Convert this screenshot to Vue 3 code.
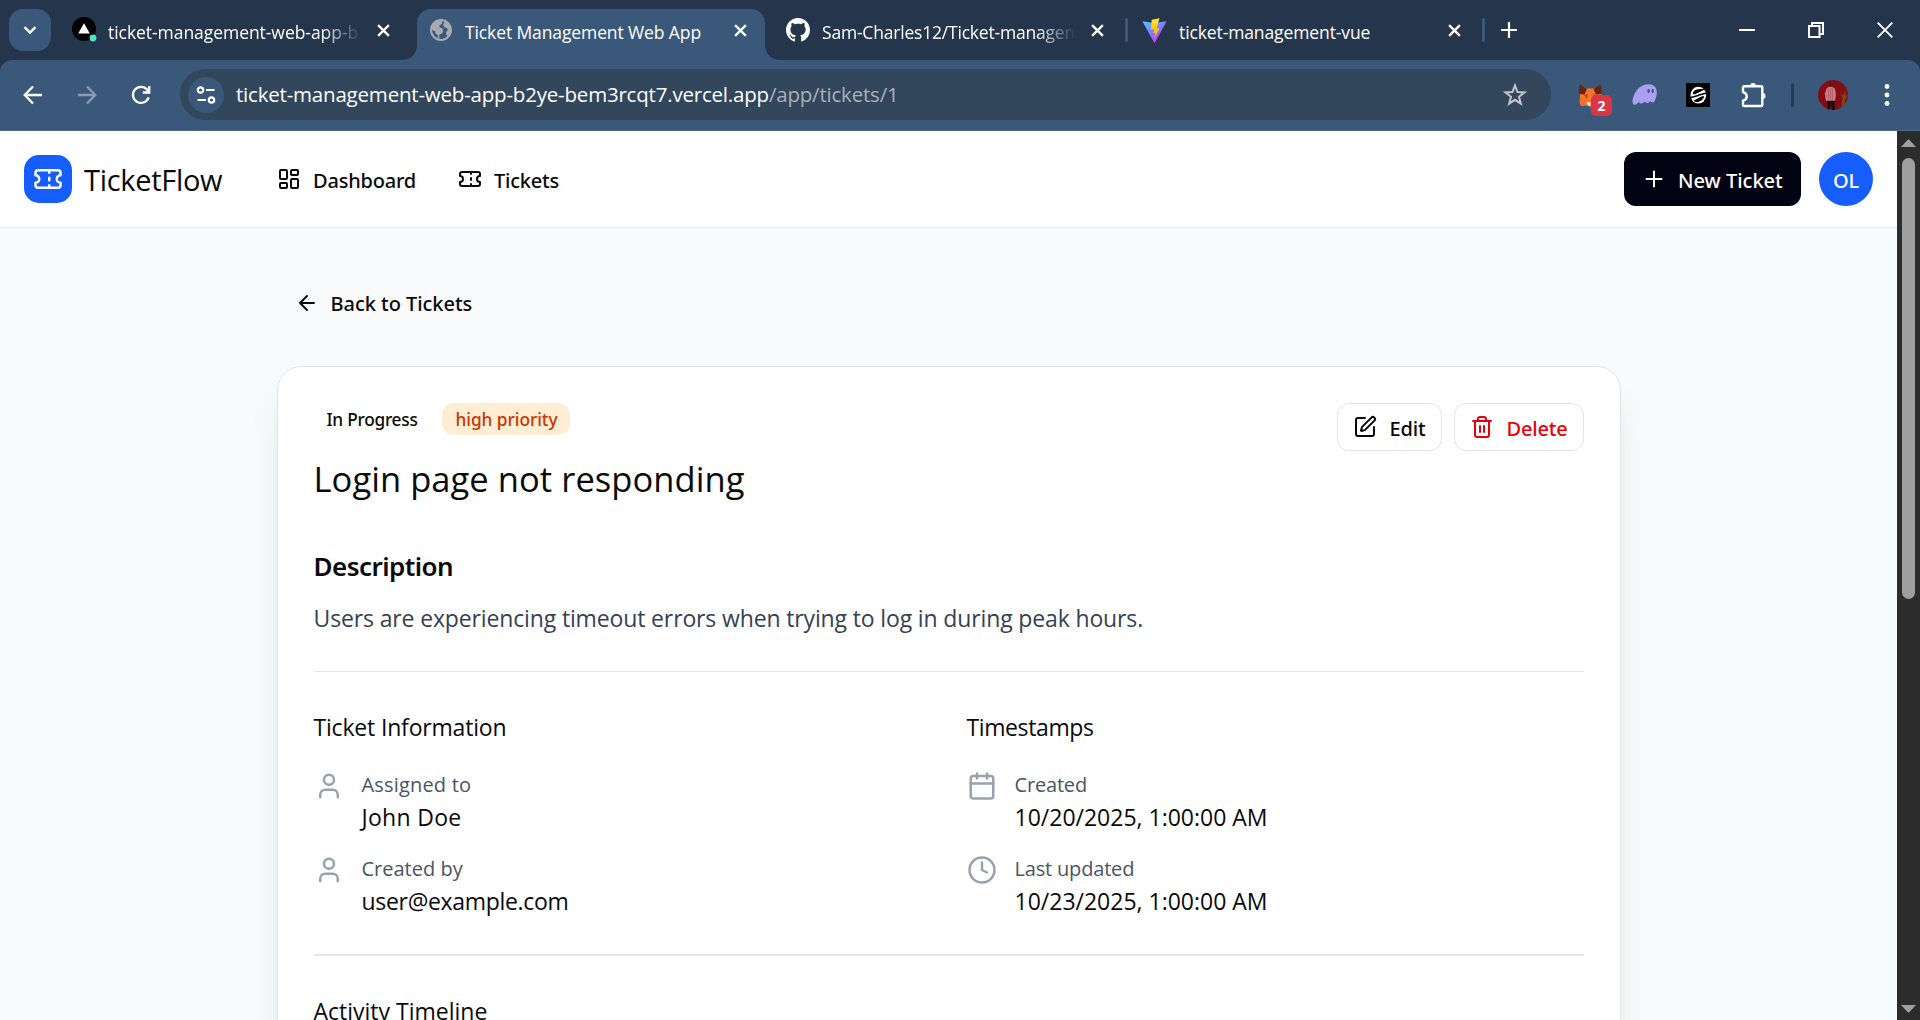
<script setup>
const people = [
  { label: 'Assigned to', value: 'John Doe', a: 'ls-p18', b: 'ls-p30' },
  { label: 'Created by', value: 'user@example.com', a: 'ls-0', b: 'ls-m31' },
]
const times = [
  { icon: 'calendar', label: 'Created', value: '10/20/2025, 1:00:00 AM' },
  { icon: 'clock', label: 'Last updated', value: '10/23/2025, 1:00:00 AM' },
]
</script>

<template>
  <div class="window">
    <div class="tabstrip">
      <button class="tab-search">
        <svg width="16" height="16" viewBox="0 0 16 16" fill="none" stroke="#fff" stroke-width="2.4"><path d="M2.6 5.2 8 10.6l5.4-5.4" /></svg>
      </button>

      <div class="tab tab-one">
        <svg class="fav" width="26" height="26" viewBox="0 0 26 26">
          <circle cx="12" cy="12" r="12" fill="#000" />
          <path d="M12 6.2 17.8 16.6H6.2z" fill="#fff" />
          <circle cx="21" cy="21" r="3.4" fill="#50e3c2" />
        </svg>
        <span class="tab-title fade">ticket-management-web-app-b2ye</span>
        <svg class="x" viewBox="0 0 12 12"><path d="M1 1l10 10M11 1 1 11" /></svg>
      </div>

      <div class="tab tab-active">
        <svg class="fav" width="22" height="22" viewBox="0 0 22 22">
          <circle cx="11" cy="11" r="10" fill="#3b597b" stroke="#a5abb1" stroke-width="2" />
          <path d="M1.5 11c0-5.500 4-9.500 9.500-9.700l1.300.5-.3 3.200-2.600 1.300.2 2.200 2.500.6 1.300 2.600-1.500 3-2.400.6-.3 4-1.700.8L8 16.500l-2.800-2.400.3-1.900z" fill="#a5abb1" />
          <path d="M14.500 2.200c4 1.500 6 5 6 8.800 0 2.500-1 5-2.500 6.800l-1.800-2-.2-2.800 1.900-1.800-.9-2.300-2.600-.6-1.200-2.100z" fill="#a5abb1" />
        </svg>
        <span class="tab-title">Ticket Management Web App</span>
        <svg class="x" viewBox="0 0 12 12"><path d="M1 1l10 10M11 1 1 11" /></svg>
      </div>

      <div class="tab tab-three">
        <svg class="fav" width="24" height="24" viewBox="0 0 16 16" fill="#fff"><path d="M8 0C3.580 0 0 3.580 0 8c0 3.540 2.290 6.530 5.470 7.590.4.070.55-.17.55-.38 0-.19-.01-.82-.01-1.490-2.010.37-2.530-.49-2.690-.94-.09-.23-.48-.94-.82-1.130-.28-.15-.68-.52-.01-.53.63-.01 1.080.58 1.230.82.72 1.210 1.870.87 2.330.66.070-.52.28-.87.51-1.070-1.780-.2-3.640-.89-3.640-3.950 0-.87.31-1.590.82-2.150-.08-.2-.36-1.020.08-2.120 0 0 .67-.21 2.200.82.64-.18 1.320-.27 2-.27s1.360.09 2 .27c1.530-1.040 2.200-.82 2.200-.82.44 1.100.16 1.920.08 2.120.51.56.82 1.270.82 2.150 0 3.070-1.870 3.750-3.650 3.950.29.25.54.73.54 1.480 0 1.070-.01 1.930-.01 2.200 0 .21.15.46.55.38A8.010 8.010 0 0 0 16 8c0-4.420-3.580-8-8-8z" /></svg>
        <span class="tab-title fade">Sam-Charles12/Ticket-management</span>
        <svg class="x" viewBox="0 0 12 12"><path d="M1 1l10 10M11 1 1 11" /></svg>
      </div>
      <i class="tab-sep"></i>
      <div class="tab tab-four">
        <svg class="fav" width="25" height="25" viewBox="0 0 25 25">
          <defs>
            <linearGradient id="vg" x1="0" y1="0" x2=".6" y2="1"><stop offset="0" stop-color="#41d1ff" /><stop offset="1" stop-color="#bd34fe" /></linearGradient>
            <linearGradient id="vb" x1="0" y1="0" x2="0" y2="1"><stop offset="0" stop-color="#ffea2e" /><stop offset="1" stop-color="#ffa800" /></linearGradient>
          </defs>
          <path d="M.4 3.200 12 5l12.600-1.800L13 24.600q-.5.700-1 0z" fill="url(#vg)" />
          <path d="M17.500.2 9.700 1.700 9 11.700l3.200-.6-.9 4.200 2-.6-1.300 6.500 5.500-11-3 .5z" fill="url(#vb)" />
        </svg>
        <span class="tab-title">ticket-management-vue</span>
        <svg class="x" viewBox="0 0 12 12"><path d="M1 1l10 10M11 1 1 11" /></svg>
      </div>
      <i class="tab-sep"></i>
      <svg class="plus-tab" width="16" height="16" viewBox="0 0 16 16" stroke="#fff" stroke-width="2.200"><path d="M8 0v16M0 8h16" /></svg>
      <div class="controls">
        <svg width="16" height="16" viewBox="0 0 16 16" stroke="#fff" stroke-width="2" fill="none"><path d="M0 8h16" /></svg>
        <svg width="16" height="16" viewBox="0 0 16 16" stroke="#fff" stroke-width="2" fill="none"><path d="M1 4h10.500v11H1zM4 4V1h11v11h-3.500" /></svg>
        <svg width="16" height="16" viewBox="0 0 16 16" stroke="#fff" stroke-width="1.900" fill="none"><path d="M.7.7l14.600 14.600M15.300.7.7 15.300" /></svg>
      </div>
    </div>

    <div class="toolbar">
      <svg class="nav" viewBox="0 0 20 20"><path d="M19 10H2M10 1.500 1.700 10l8.300 8.500" /></svg>
      <svg class="nav dim" viewBox="0 0 20 20"><path d="M1 10h17M10 1.500l8.300 8.500-8.300 8.500" /></svg>
      <svg class="nav" viewBox="0 0 20 20"><path d="M17.600 12.300A8 8 0 1 1 16 4.600L18 7M18.200 1v6.500h-6.400" /></svg>
      <div class="omnibox">
        <span class="site">
          <svg width="20" height="20" viewBox="0 0 20 20" fill="none" stroke="#fff" stroke-width="2.200"><circle cx="4.500" cy="5" r="2.700" /><path d="M10 5h8.500M1.500 15H10" /><circle cx="15.500" cy="15" r="2.700" /></svg>
        </span>
        <span class="url">ticket-management-web-app-b2ye-bem3rcqt7.vercel.app<span class="path">/app/tickets/1</span></span>
        <svg class="star" width="24" height="24" viewBox="0 0 24 24" fill="none" stroke="#c4c6c8" stroke-width="2"><path d="M12 2.500l2.500 6.600 7 .3-5.500 4.400 1.900 6.900-5.900-3.900-5.900 3.900L8 13.800 2.500 9.400l7-.3z" /></svg>
      </div>
      <div class="ext">
        <div class="fox">
          <svg width="26" height="26" viewBox="0 0 26 26">
            <path d="M2 4l7 2.500h6L22.500 4l1 8-1.500 10-5 1-4 2.500-4-2-6 .5-1-8z" fill="#f6752b" />
            <path d="M2 2.500 9 7l-2.500 5.500L1 12 .8 7zM22.500 2.500 15.500 7l2.500 5.500 5.500-.5.200-5z" fill="#6b2412" />
            <path d="M6 13l4-1-1 5zM19 13l-4-1 1 5z" fill="#c8410f" />
            <path d="M1.500 17.500 8 17l2 5-8 .7z" fill="#ff6a2b" />
            <path d="M8.500 20h4v4l-3-1z" fill="#e9e2dd" />
          </svg>
          <b class="badge">2</b>
        </div>
        <svg class="ghost" width="25" height="21" viewBox="0 0 25 21">
          <path d="M.5 16.500C1.500 9.500 7 .5 16 .3c5.500-.2 9 3 8.800 8.200-.2 4.500-2 9.700-4 10-1.500.2-2-1-2.500-1.500-1 1.500-2.200 2.200-3.500 2-1-.2-1.300-1-1.600-1.500C11 19.300 8.700 20 7.800 19.200c-.6-.5-.5-1.100-.4-1.600C5.500 19.800 3.900 20.900 2.300 20.700.9 20.500.2 18.500.5 16.500z" fill="#ab9ff2" />
          <ellipse cx="16.500" cy="7" rx="1.200" ry="2" fill="#3b4e77" /><ellipse cx="20.700" cy="7" rx="1.200" ry="2" fill="#3b4e77" />
        </svg>
        <svg class="sbox" width="24" height="24" viewBox="0 0 24 24">
          <path d="M0 0h24v24H0z" fill="#000" />
          <ellipse cx="12.300" cy="12.200" rx="7.800" ry="8.400" fill="#fff" />
          <path d="M18.800 6.500 9.500 11c-2 1-3.300-.3-2.300-2C8.500 7 13 5.300 18.800 6.500zM17.800 13c.8 2-2 5.300-6 6-1.800.2-3.300-.3-4.300-1.200l6-3.300c1.500-.8 2.700-1.200 4.300-1.500z" fill="#000" />
          <path d="M3.500 15 13 12.200M12 12.300l8.800-2.200" stroke="#000" stroke-width="1.500" />
        </svg>
        <svg class="puzzle" width="26" height="26" viewBox="0 0 26 26" fill="none" stroke="#fff" stroke-width="2.400" stroke-linejoin="round"><path d="M3 4.300h17.300a1 1 0 0 1 1 1V23a1 1 0 0 1-1 1H3a1 1 0 0 1-1-1v-4.300c5-1.500 5-7 0-8.700V5.300a1 1 0 0 1 1-1z" /><path d="M9 4a3 3 0 0 1 6 0zM21.500 11a3 3 0 0 1 0 6z" fill="#fff" stroke="none" /></svg>
        <i class="ext-sep"></i>
        <svg class="me" width="30" height="30" viewBox="0 0 30 30">
          <defs><clipPath id="pc"><circle cx="15" cy="15" r="15" /></clipPath></defs>
          <g clip-path="url(#pc)">
            <path d="M0 0h30v30H0z" fill="#860c14" />
            <path d="M23 28l1.500-10L22 12l3 3.500L27.500 10v6l2.500-2-2.500 6-2.500 8z" fill="#7d431d" />
            <path d="M9 19.500h7.500L17 30h-3.200L12.800 22l-.8 8H9z" fill="#1a0b0d" />
            <path d="M8.500 8.500l2.500-1.700h3l2.800 1.700 1.200 6-1 6.300H8L6.800 14z" fill="#c57c82" />
            <path d="M10.500 8.500v11M12.500 8v11.500M14.500 8.500v11" stroke="#a94e58" stroke-width=".6" />
            <ellipse cx="12.500" cy="4.300" rx="1.700" ry="2.300" fill="#4a1c17" />
          </g>
        </svg>
        <svg class="dots" width="6" height="22" viewBox="0 0 6 22" fill="#fff"><circle cx="3" cy="2.500" r="2.400" /><circle cx="3" cy="11" r="2.400" /><circle cx="3" cy="19.500" r="2.400" /></svg>
      </div>
    </div>

    <div class="viewport">
      <div class="page">
        <header>
          <div class="logo">
            <svg class="ic" width="30" height="30" viewBox="0 0 24 24"><path d="M2 9a3 3 0 0 1 0 6v2a2 2 0 0 0 2 2h16a2 2 0 0 0 2-2v-2a3 3 0 0 1 0-6V7a2 2 0 0 0-2-2H4a2 2 0 0 0-2 2Z" /><path d="M13 5v2M13 17v2M13 11v2" /></svg>
          </div>
          <span class="brand">TicketFlow</span>
          <nav>
            <a><svg class="ic" width="24" height="24" viewBox="0 0 24 24"><rect width="7" height="9" x="3" y="3" rx="1" /><rect width="7" height="5" x="14" y="3" rx="1" /><rect width="7" height="9" x="14" y="12" rx="1" /><rect width="7" height="5" x="3" y="16" rx="1" /></svg><span>Dashboard</span></a>
            <a><svg class="ic" width="24" height="24" viewBox="0 0 24 24"><path d="M2 9a3 3 0 0 1 0 6v2a2 2 0 0 0 2 2h16a2 2 0 0 0 2-2v-2a3 3 0 0 1 0-6V7a2 2 0 0 0-2-2H4a2 2 0 0 0-2 2Z" /><path d="M13 5v2M13 17v2M13 11v2" /></svg><span>Tickets</span></a>
          </nav>
          <button class="new"><svg class="ic" width="24" height="24" viewBox="0 0 24 24"><path d="M4.500 12h15M12 4.500v15" /></svg><span>New Ticket</span></button>
          <div class="avatar"><span>OL</span></div>
        </header>

        <main>
          <a class="back"><svg class="ic" width="24" height="24" viewBox="0 0 24 24"><path d="m12 19-7-7 7-7M19 12H5" /></svg><span>Back to Tickets</span></a>

          <section class="card">
            <div class="top">
              <div>
                <div class="badges"><span class="status">In Progress</span><span class="priority">high priority</span></div>
                <h1>Login page not responding</h1>
              </div>
              <div class="actions">
                <button class="edit"><svg class="ic" width="24" height="24" viewBox="0 0 24 24"><path d="M12 3H5a2 2 0 0 0-2 2v14a2 2 0 0 0 2 2h14a2 2 0 0 0 2-2v-7" /><path d="M18.375 2.625a1 1 0 0 1 3 3l-9.013 9.014a2 2 0 0 1-.853.505l-2.873.84a.5.5 0 0 1-.62-.62l.84-2.873a2 2 0 0 1 .506-.852z" /></svg><span>Edit</span></button>
                <button class="delete"><svg class="ic" width="24" height="24" viewBox="0 0 24 24"><path d="M3 6h18M19 6v14c0 1-1 2-2 2H7c-1 0-2-1-2-2V6M8 6V4c0-1 1-2 2-2h4c1 0 2 1 2 2v2M10 11v6M14 11v6" /></svg><span>Delete</span></button>
              </div>
            </div>
            <h2>Description</h2>
            <p class="desc">Users are experiencing timeout errors when trying to log in during peak hours.</p>
            <hr>
            <div class="cols">
              <div>
                <h3 class="ls-m18">Ticket Information</h3>
                <div v-for="p in people" :key="p.label" class="item">
                  <svg class="ic" width="30" height="30" viewBox="0 0 24 24"><path d="M19 21v-2a4 4 0 0 0-4-4H9a4 4 0 0 0-4 4v2" /><circle cx="12" cy="7" r="4" /></svg>
                  <div><p class="label" :class="p.a">{{ p.label }}</p><p class="value" :class="p.b">{{ p.value }}</p></div>
                </div>
              </div>
              <div>
                <h3 class="ls-m39">Timestamps</h3>
                <div v-for="t in times" :key="t.label" class="item">
                  <svg class="ic" width="30" height="30" viewBox="0 0 24 24">
                    <template v-if="t.icon === 'calendar'"><path d="M8 2v4M16 2v4M3 10h18" /><rect width="18" height="18" x="3" y="4" rx="2" /></template>
                    <template v-else><circle cx="12" cy="12" r="10" /><path d="M12 6v6l4 2" /></template>
                  </svg>
                  <div><p class="label ls-m18">{{ t.label }}</p><p class="value">{{ t.value }}</p></div>
                </div>
              </div>
            </div>
            <hr class="thick">
            <h3 class="activity">Activity Timeline</h3>
          </section>
        </main>
      </div>
      <div class="scroll">
        <svg width="15" height="8" viewBox="0 0 15 8" fill="#9f9f9f"><path d="M7.500 0 15 8H0z" /></svg>
        <div class="track"><div class="thumb"></div></div>
        <svg width="15" height="8" viewBox="0 0 15 8" fill="#9f9f9f"><path d="M7.500 8 15 0H0z" /></svg>
      </div>
    </div>
  </div>
</template>

<style>
body { margin: 0; overflow: hidden; }
</style>

<style scoped>
* { box-sizing: border-box; }
.window { width: 1920px; height: 1020px; overflow: hidden; display: flex; flex-direction: column; background: #25364c; font-family: "Open Sans", "Noto Sans", sans-serif; color: #0a0a0a; }
svg { display: block; flex: none; }
button { border: 0; padding: 0; font-family: inherit; color: inherit; }
h1, h2, h3, p { margin: 0; font-weight: 400; white-space: nowrap; }
.ic { fill: none; stroke: currentColor; stroke-width: 2; stroke-linecap: round; stroke-linejoin: round; }

/* tab strip */
.tabstrip { height: 60px; flex: none; display: flex; align-items: center; padding-left: 9px; color: #fff; }
.tab-search { width: 42px; height: 42px; border-radius: 14px; background: #3a587a; display: grid; place-items: center; }
.tab { display: flex; align-items: center; }
.tab .fav { overflow: visible; }
.tab-title { flex: 1; min-width: 0; overflow: hidden; white-space: nowrap; font-size: 17.500px; line-height: 24px; padding-top: 3px; letter-spacing: -.11px; }
.fade { -webkit-mask-image: linear-gradient(90deg, #000 calc(100% - 40px), transparent); mask-image: linear-gradient(90deg, #000 calc(100% - 40px), transparent); }
.x { width: 13px; height: 13px; fill: none; stroke: #fff; stroke-width: 2.100; }
.tab-one { margin-left: 21px; width: 318px; }
.tab-one .tab-title { margin: 0 16px 0 10px; letter-spacing: -.05px; }
.tab-active { position: relative; margin-left: 27px; width: 348px; height: 51px; align-self: flex-end; background: #3a587a; border-radius: 14px 14px 0 0; padding: 0 18px 9px 13px; }
.tab-active .tab-title { margin-left: 13px; }
.tab-active::before, .tab-active::after { content: ""; position: absolute; bottom: 0; width: 14px; height: 14px; }
.tab-active::before { left: -14px; background: radial-gradient(circle at 0 0, transparent 13.500px, #3a587a 14px); }
.tab-active::after { right: -14px; background: radial-gradient(circle at 100% 0, transparent 13.500px, #3a587a 14px); }
.tab-three { margin-left: 21px; width: 318px; }
.tab-three .tab-title { margin: 0 16px 0 12px; letter-spacing: -.2px; }
.tab-sep { width: 3px; height: 24px; border-radius: 2px; background: #3a587a; flex: none; margin-left: 21px; }
.tab-four { margin-left: 14px; width: 319px; }
.tab-four .tab-title { margin-left: 12px; }
.plus-tab { margin-left: 16px; }
.controls { margin-left: auto; display: flex; gap: 53px; padding: 0 27px 1px 0; }

/* toolbar */
.toolbar { height: 71px; flex: none; display: flex; align-items: center; background: #3a587a; border-radius: 12px 12px 0 0; padding: 0 0 2px 23px; box-shadow: inset 0 -1px #4d6787; }
.nav { width: 20px; height: 20px; fill: none; stroke: #fff; stroke-width: 2.300; margin-right: 34px; }
.nav.dim { stroke: #8a9bb0; }
.nav:nth-child(3) { margin-right: 29px; }
.omnibox { width: 1371px; height: 51px; border-radius: 26px; background: #32465c; display: flex; align-items: center; padding: 0 24px 0 8px; }
.site { width: 36px; height: 36px; border-radius: 50%; background: #3a587a; display: grid; place-items: center; }
.url { flex: 1; margin-left: 12px; font-size: 20.500px; color: #fff; letter-spacing: -.2px; line-height: 30px; padding-bottom: 1px; white-space: nowrap; }
.path { color: #a9b1bb; letter-spacing: -.2px; }
.ext { display: flex; align-items: center; }
.fox { position: relative; margin-left: 27px; }
.badge { position: absolute; left: 13px; top: 13px; width: 21px; height: 21px; border-radius: 5px; background: #db3445; color: #fff; font-size: 14px; line-height: 21px; text-align: center; }
.ghost { margin-left: 28px; }
.sbox { margin-left: 29px; }
.puzzle { margin-left: 31px; }
.ext-sep { width: 3px; height: 24px; border-radius: 2px; background: #273b53; margin-left: 24px; }
.me { margin-left: 24px; }
.dots { margin-left: 36px; }

/* page */
.viewport { flex: 1; min-height: 0; display: flex; }
.page { width: 1897px; overflow: hidden; background: #f9fafc; }
.scroll { width: 23px; background: #2c2c2c; display: flex; flex-direction: column; align-items: center; padding: 8px 0 7px; }
.track { flex: 1; padding-top: 11px; }
.thumb { width: 13px; height: 441px; border-radius: 7px; background: #9f9f9f; }

header { height: 97px; background: #fff; border-bottom: 1px solid #e1e4e8; display: flex; align-items: center; padding: 0 24px; }
.logo { width: 48px; height: 48px; border-radius: 15px; background: #155dfc; color: #fff; display: grid; place-items: center; }
.brand { margin-left: 12px; font-size: 29px; line-height: 40px; letter-spacing: -.3px; padding-top: 1px; width: 138px; }
nav { display: flex; margin-left: 55px; }
nav a, .new, .back, .edit, .delete, .avatar, .status, .priority { font-family: "Noto Sans", "Open Sans", sans-serif; font-weight: 500; font-size: 20px; letter-spacing: -.2px; white-space: nowrap; }
nav a { display: flex; align-items: center; gap: 12px; width: 181px; }
nav a span, .new span, .edit span, .delete span { padding-top: 3px; line-height: 28px; }
.back span { padding-top: 2px; line-height: 28px; }
.new { margin-left: auto; width: 177px; height: 54px; border-radius: 12px; background: #030213; color: #fff; display: flex; align-items: center; padding-left: 18px; gap: 12px; letter-spacing: 0; }
.avatar { margin-left: 18px; width: 54px; height: 54px; border-radius: 50%; background: #155dfc; color: #fff; display: grid; place-items: center; line-height: 28px; padding-top: 3px; }

main { width: 1344px; margin: 0 auto; padding-top: 57px; }
.back { display: flex; align-items: center; height: 36px; padding-left: 18px; gap: 12px; letter-spacing: -.04px; }
.card { margin-top: 45px; height: 900px; background: #fff; border: 1px solid #e3e4e6; border-radius: 24px; padding: 36px; box-shadow: 0 30px 38px -8px rgba(0, 0, 0, .1), 0 12px 15px -9px rgba(0, 0, 0, .1); }
.top { display: flex; justify-content: space-between; height: 100px; }
.badges { display: flex; gap: 12px; height: 32px; }
.status, .priority { font-size: 17.300px; line-height: 31px; border-radius: 12px; padding: 1px 13px 0; }
.status { width: 116px; letter-spacing: -.26px; }
.priority { width: 128px; padding-left: 14px; background: #ffedd4; color: #ca3500; letter-spacing: -.04px; }
h1 { font-size: 34.500px; line-height: 48px; margin-top: 20px; letter-spacing: .06px; }
.actions { display: flex; gap: 12px; }
.edit, .delete { height: 48px; border: 1px solid #e4e4e6; border-radius: 12px; background: #fff; display: flex; align-items: center; gap: 13px; padding-left: 15px; letter-spacing: -.17px; }
.edit { width: 105px; }
.delete { width: 130px; color: #e7000b; }
h2 { margin-top: 43px; font-family: "Noto Sans", sans-serif; font-weight: 600; font-size: 26px; line-height: 40px; letter-spacing: -.55px; }
.desc { margin-top: 14px; font-size: 23px; line-height: 36px; letter-spacing: -.14px; color: #364153; }
hr { border: 0; height: 1px; margin: 35px 0 0; background: #e4e4e6; }
hr.thick { height: 2px; }
.cols { display: grid; grid-template-columns: 1fr 1fr; column-gap: 36px; padding-top: 37px; }
h3 { font-size: 23px; line-height: 36px; }
.item { display: flex; gap: 18px; margin-top: 18px; }
h3 + .item { margin-top: 24px; }
.item .ic { color: #99a1af; margin-top: 2px; }
.label { font-size: 20px; line-height: 29px; padding-top: 1px; color: #4a5565; }
.value { font-size: 23px; line-height: 36px; }
.activity { margin-top: 37px; }
.ls-0 { letter-spacing: 0; }
.ls-p18 { letter-spacing: .18px; }
.ls-p30 { letter-spacing: .3px; }
.ls-m31 { letter-spacing: -.31px; }
.ls-m18 { letter-spacing: -.18px; }
.ls-m39 { letter-spacing: -.39px; }
</style>
